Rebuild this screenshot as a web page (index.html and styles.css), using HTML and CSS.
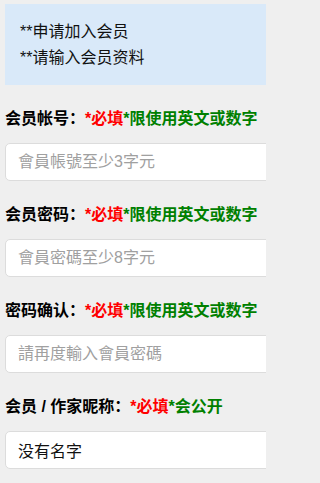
FILE: index.html
```html
<!DOCTYPE html>
<html lang="zh">
<head>
<meta charset="utf-8">
<link rel="stylesheet" href="styles.css">
</head>
<body>
<div class="page">
  <div class="notice">
    <div class="notice-line">**申请加入会员</div>
    <div class="notice-line">**请输入会员资料</div>
  </div>
  <div class="field">
    <label class="label">会员帐号：<span class="req">*必填</span><span class="hint">*限使用英文或数字</span></label>
    <input class="input" type="text" placeholder="會員帳號至少3字元">
  </div>
  <div class="field">
    <label class="label">会员密码：<span class="req">*必填</span><span class="hint">*限使用英文或数字</span></label>
    <input class="input" type="password" placeholder="會員密碼至少8字元">
  </div>
  <div class="field">
    <label class="label">密码确认：<span class="req">*必填</span><span class="hint">*限使用英文或数字</span></label>
    <input class="input" type="password" placeholder="請再度輸入會員密碼">
  </div>
  <div class="field">
    <label class="label">会员 / 作家昵称：<span class="req">*必填</span><span class="hint">*会公开</span></label>
    <input class="input" type="text" value="没有名字">
  </div>
</div>
</body>
</html>
```

FILE: styles.css
```css
html, body {
  margin: 0;
  padding: 0;
  background: #efefef;
  overflow: hidden;
}

body {
  font-family: "Liberation Sans", "Noto Sans CJK SC", "Noto Sans CJK TC", sans-serif;
  font-size: 16px;
  color: #111;
}

.page {
  box-sizing: border-box;
  width: 100%;
  max-width: 266px;
  overflow: hidden;
  padding: 4px 0 20px 5px;
}

.notice {
  width: 300px;
  background: #d9e9f9;
  padding: 15px 15px 14px;
  box-sizing: border-box;
}

.notice-line {
  line-height: 26px;
  white-space: nowrap;
}

.field {
  margin-top: 22px;
  display: flex;
  flex-direction: column;
  align-items: flex-start;
  gap: 12px;
}

.label {
  display: block;
  font-weight: bold;
  line-height: 24px;
  white-space: nowrap;
  color: #000;
}

.req {
  color: #ff0000;
}

.hint {
  color: #008000;
}

.input {
  box-sizing: border-box;
  width: 300px;
  flex: none;
  height: 38px;
  margin: 0;
  padding: 0 12px;
  border: 1px solid #dcdcdc;
  border-radius: 5px;
  background: #fff;
  font-family: "Liberation Sans", "Noto Sans CJK SC", "Noto Sans CJK TC", sans-serif;
  font-size: 16px;
  color: #111;
  outline: none;
}

.input::placeholder {
  color: #a0a0a0;
}
```
